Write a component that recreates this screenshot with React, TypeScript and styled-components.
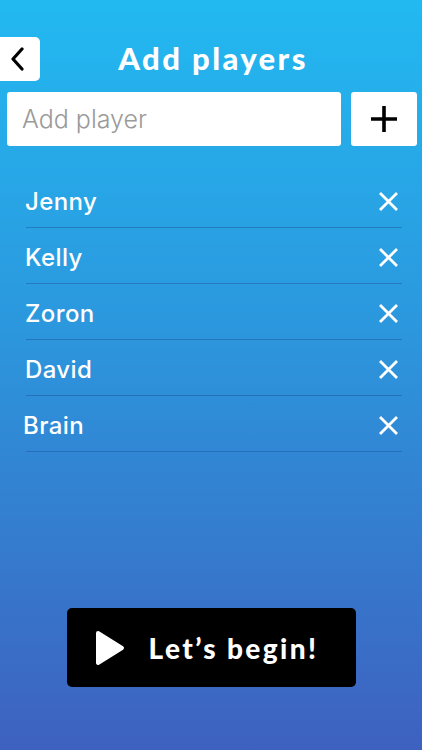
import React, { useState } from "react";
import styled, { createGlobalStyle } from "styled-components";

const GlobalStyle = createGlobalStyle`
  html, body {
    margin: 0;
    padding: 0;
  }
  * {
    box-sizing: border-box;
  }
`;

const Page = styled.div`
  min-height: 100vh;
  display: flex;
  flex-direction: column;
  background: linear-gradient(180deg, #22b9f1 0%, #2c96dd 45%, #3e61bf 100%);
  font-family: Inter, "Open Sans", sans-serif;
`;

const Header = styled.header`
  display: grid;
  grid-template-columns: 40px 1fr 40px;
  align-items: center;
  margin-top: 36px;
  height: 44px;
`;

const BackButton = styled.button`
  width: 40px;
  height: 44px;
  border: none;
  background: #fff;
  border-radius: 0 5px 5px 0;
  display: flex;
  align-items: center;
  justify-content: center;
  padding: 0 6px 0 0;
`;

const Title = styled.h1`
  margin: 0;
  text-align: center;
  color: #fff;
  font-family: Lato, sans-serif;
  font-weight: 900;
  font-size: 31px;
  letter-spacing: 2.4px;
  line-height: 44px;
  padding: 0 0 2px 4px;
`;

const InputRow = styled.div`
  display: flex;
  gap: 10px;
  margin-top: 12px;
  padding: 0 5px 0 7px;
`;

const NameInput = styled.input`
  flex: 1;
  min-width: 0;
  height: 54px;
  border: none;
  border-radius: 3px;
  background: #fff;
  padding: 0 12px 0 15px;
  font-family: Inter, sans-serif;
  font-weight: 300;
  font-size: 25px;
  color: #222;
  caret-color: #222;
  outline: none;

  &::placeholder {
    color: #9a9a9a;
  }
`;

const SquareButton = styled.button`
  width: 66px;
  height: 54px;
  border: none;
  border-radius: 3px;
  background: #fff;
  display: flex;
  align-items: center;
  justify-content: center;
  padding: 0;
`;

const List = styled.ul`
  list-style: none;
  margin: 26px 20px 0 26px;
  padding: 0;
`;

const Row = styled.li`
  display: flex;
  align-items: center;
  justify-content: space-between;
  height: 56px;
  border-bottom: 1px solid rgba(20, 60, 130, 0.35);
  padding-top: 3px;
`;

const Name = styled.span<{ $shift?: number }>`
  color: #fff;
  font-family: Inter, sans-serif;
  font-weight: 500;
  font-size: 24px;
  letter-spacing: 0.4px;
  margin-left: ${(p) => p.$shift ?? -1}px;
`;

const RemoveButton = styled.button`
  border: none;
  background: none;
  padding: 0;
  margin-right: 3px;
  display: flex;
`;

const Spacer = styled.div`
  flex: 1;
`;

const StartButton = styled.button`
  align-self: center;
  width: 289px;
  height: 79px;
  margin: 0 0 63px 0;
  border: none;
  border-radius: 5px;
  background: #000;
  color: #fff;
  display: flex;
  align-items: center;
  gap: 24px;
  padding: 0 0 0 28px;
  font-family: Lato, sans-serif;
  font-weight: 900;
  font-size: 28px;
  letter-spacing: 2.4px;
`;

const players = [
  { name: "Jenny", shift: -1 },
  { name: "Kelly", shift: -1 },
  { name: "Zoron", shift: -1 },
  { name: "David", shift: -1 },
  { name: "Brain", shift: -3 },
];

export default function App() {
  const [value, setValue] = useState("");

  return (
    <>
      <GlobalStyle />
      <Page>
        <Header>
          <BackButton aria-label="Back">
            <svg width="14" height="24" viewBox="0 0 14 24">
              <path d="M12 2 L3 12 L12 22" fill="none" stroke="#000" strokeWidth="3.2" strokeLinecap="round" strokeLinejoin="round" />
            </svg>
          </BackButton>
          <Title>Add players</Title>
          <span />
        </Header>

        <InputRow>
          <NameInput
            autoFocus
            placeholder="Add player"
            value={value}
            onChange={(e) => setValue(e.target.value)}
          />
          <SquareButton aria-label="Add">
            <svg width="28" height="28" viewBox="0 0 28 28">
              <path d="M14 1 V27 M1 14 H27" stroke="#000" strokeWidth="3.6" />
            </svg>
          </SquareButton>
        </InputRow>

        <List>
          {players.map((p) => (
            <Row key={p.name}>
              <Name $shift={p.shift}>{p.name}</Name>
              <RemoveButton aria-label={`Remove ${p.name}`}>
                <svg width="21" height="21" viewBox="0 0 21 21">
                  <path d="M2 2 L19 19 M19 2 L2 19" stroke="#fff" strokeWidth="2.8" />
                </svg>
              </RemoveButton>
            </Row>
          ))}
        </List>

        <Spacer />

        <StartButton>
          <svg width="30" height="36" viewBox="0 0 30 36">
            <path d="M3 3 L27 18 L3 33 Z" fill="#fff" stroke="#fff" strokeWidth="4" strokeLinejoin="round" />
          </svg>
          Let’s begin!
        </StartButton>
      </Page>
    </>
  );
}
